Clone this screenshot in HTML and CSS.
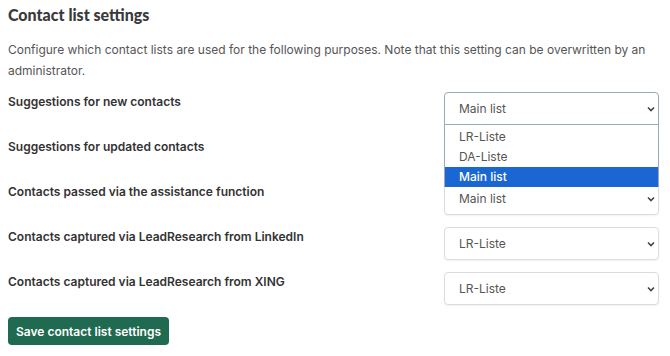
FILE: index.html
```html
<html>
  <link rel="stylesheet" href="styles.css">
  <head>
    <title>Contact list settings</title>
  </head>
  <body>
    <form class="settings" autocomplete="off">
      <h2>Contact list settings</h2>
      <p class="intro">Configure which contact lists are used for the following purposes. Note that this setting can be overwritten by an administrator.</p>

      <div class="rows">
        <label class="row-label">Suggestions for new contacts</label>
        <div class="field">
          <select class="line-select open">
            <option>Main list</option>
          </select>
          <svg class="chevron" width="8" height="6" viewBox="0 0 8 6"><path d="M1 1.5 L4 4.5 L7 1.5" fill="none" stroke="#444" stroke-width="1.6"/></svg>
          <!-- open dropdown of the first select -->
          <ul class="dropdown">
            <li>LR-Liste</li>
            <li>DA-Liste</li>
            <li class="active">Main list</li>
          </ul>
        </div>

        <label class="row-label">Suggestions for updated contacts</label>
        <div class="field">
          <select class="line-select"><option>Main list</option></select>
          <svg class="chevron" width="8" height="6" viewBox="0 0 8 6"><path d="M1 1.5 L4 4.5 L7 1.5" fill="none" stroke="#444" stroke-width="1.6"/></svg>
        </div>

        <label class="row-label">Contacts passed via the assistance function</label>
        <div class="field">
          <select class="line-select"><option>Main list</option></select>
          <svg class="chevron" width="8" height="6" viewBox="0 0 8 6"><path d="M1 1.5 L4 4.5 L7 1.5" fill="none" stroke="#444" stroke-width="1.6"/></svg>
        </div>

        <label class="row-label">Contacts captured via LeadResearch from LinkedIn</label>
        <div class="field">
          <select class="line-select"><option>LR-Liste</option></select>
          <svg class="chevron" width="8" height="6" viewBox="0 0 8 6"><path d="M1 1.5 L4 4.5 L7 1.5" fill="none" stroke="#444" stroke-width="1.6"/></svg>
        </div>

        <label class="row-label">Contacts captured via LeadResearch from XING</label>
        <div class="field">
          <select class="line-select"><option>LR-Liste</option></select>
          <svg class="chevron" width="8" height="6" viewBox="0 0 8 6"><path d="M1 1.5 L4 4.5 L7 1.5" fill="none" stroke="#444" stroke-width="1.6"/></svg>
        </div>
      </div>

      <button type="button" class="btn-save">Save contact list settings</button>
    </form>
  </body>
</html>
```

FILE: styles.css
```css
html, body {
  margin: 0;
  background: #ffffff;
}
body {
  padding: 0 11px 0 8px;
  font-family: Inter, "Liberation Sans", sans-serif;
  color: #333333;
}
h2 {
  margin: 3px 0 0;
  font-family: Lato, Inter, sans-serif;
  font-size: 16px;
  line-height: 24px;
  font-weight: 900;
  color: #3a3a3a;
}
.intro {
  margin: 12px 0 0;
  font-size: 12px;
  line-height: 21px;
  color: #555555;
}
.rows {
  margin-top: 11px;
  display: grid;
  grid-template-columns: 1fr 215px;
  row-gap: 12px;
  align-items: start;
}
.row-label {
  font-size: 12px;
  line-height: 20px;
  font-weight: 600;
  color: #333333;
}
.field {
  position: relative;
}
.line-select {
  display: block;
  width: 100%;
  height: 33px;
  padding: 0 8px 0 14px;
  appearance: none;
  font-family: Inter, "Liberation Sans", sans-serif;
  font-size: 12px;
  color: #555555;
  background-color: #ffffff;
  border: 1px solid #dcdcdc;
  border-radius: 4px;
  box-shadow: 0 1px 2px rgba(0, 0, 0, 0.06);
}
.line-select.open {
  border-color: #9aaabb;
  border-radius: 4px 4px 0 0;
}
.chevron {
  position: absolute;
  right: 4px;
  top: 14px;
}
.dropdown {
  position: absolute;
  top: 32px;
  left: 0;
  right: 0;
  margin: 0;
  padding: 2px 0 0;
  list-style: none;
  background: #ffffff;
  border: 1px solid #9aaabb;
  border-bottom: none;
  z-index: 2;
}
.dropdown li {
  height: 20px;
  line-height: 20px;
  padding-left: 14px;
  font-size: 12px;
  color: #555555;
}
.dropdown li.active {
  background: #1a66d2;
  color: #ffffff;
  font-weight: 500;
}
.btn-save {
  margin-top: 12px;
  height: 28px;
  padding: 0 8px;
  font-family: Inter, "Liberation Sans", sans-serif;
  font-size: 12px;
  font-weight: 600;
  color: #ffffff;
  background: #1f6a50;
  border: none;
  border-radius: 4px;
}
```
